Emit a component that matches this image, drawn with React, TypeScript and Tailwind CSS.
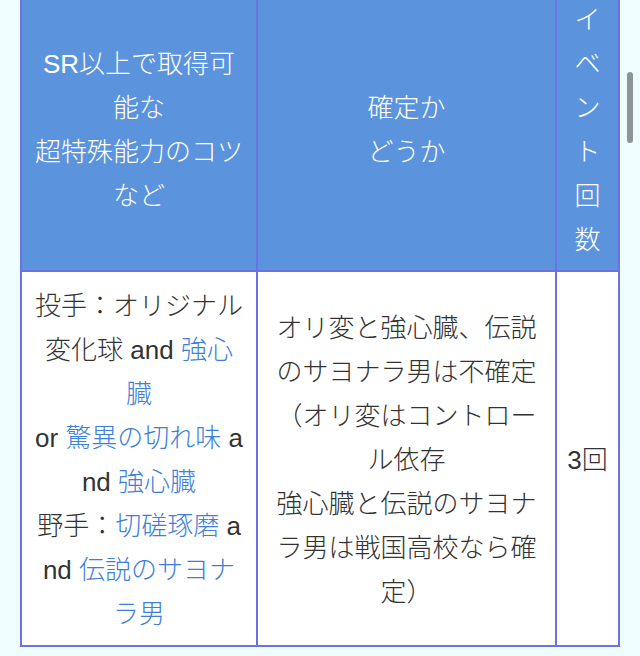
import React from "react";

const L = ({ children }: { children: React.ReactNode }) => (
  <span className="text-[#3d7fdb]">{children}</span>
);

export default function App() {
  return (
    <div
      className="relative w-[640px] h-[656px] overflow-hidden bg-[#effdff]"
      style={{ fontFamily: "'Liberation Sans', 'Noto Sans CJK JP', sans-serif" }}
    >
      <div className="ml-[20px] mt-[-16px] w-[600px] grid grid-cols-[236px_299px_63px] border-l-2 border-t-2 border-[#6a72e4] text-[26px] leading-[44px] font-light">
        {/* header */}
        <div className="flex items-center justify-center text-center bg-[#5b93dd] text-white border-r-2 border-b-2 border-[#6a72e4] px-3 pt-[12px] pb-[8px]">
          <div>
            SR以上で取得可
            <br />能な
            <br />超特殊能力のコツ
            <br />など
          </div>
        </div>
        <div className="flex items-center justify-center text-center bg-[#5b93dd] text-white border-r-2 border-b-2 border-[#6a72e4] px-3 pt-[12px] pb-[8px]">
          <div>
            確定か
            <br />どうか
          </div>
        </div>
        <div className="flex items-center justify-center text-center bg-[#5b93dd] text-white border-r-2 border-b-2 border-[#6a72e4] px-[8px] pt-[12px] pb-[8px]">
          <div>
            イ<br />ベ<br />ン<br />ト<br />回<br />数
          </div>
        </div>
        {/* body */}
        <div className="flex items-center justify-center text-center bg-white text-[#333333] border-r-2 border-b-2 border-[#6a72e4] px-3 pt-[12px] pb-[9px]">
          <div>
            投手：オリジナル
            <br />変化球 and <L>強心</L>
            <br />
            <L>臓</L>
            <br />or <L>驚異の切れ味</L> a
            <br />nd <L>強心臓</L>
            <br />野手：<L>切磋琢磨</L> a
            <br />nd <L>伝説のサヨナ</L>
            <br />
            <L>ラ男</L>
          </div>
        </div>
        <div className="flex items-center justify-center text-center bg-white text-[#333333] border-r-2 border-b-2 border-[#6a72e4] px-3 pt-[12px] pb-[9px]">
          <div>
            オリ変と強心臓、伝説
            <br />のサヨナラ男は不確定
            <br />（オリ変はコントロー
            <br />ル依存
            <br />強心臓と伝説のサヨナ
            <br />ラ男は戦国高校なら確
            <br />定）
          </div>
        </div>
        <div className="flex items-center justify-center text-center bg-white text-[#333333] border-r-2 border-b-2 border-[#6a72e4] px-[8px] pt-[12px] pb-[9px]">
          <div>3回</div>
        </div>
      </div>
      <div className="absolute left-[627px] top-[72px] w-[6px] h-[71px] rounded-full bg-[#8c9596]" />
    </div>
  );
}
